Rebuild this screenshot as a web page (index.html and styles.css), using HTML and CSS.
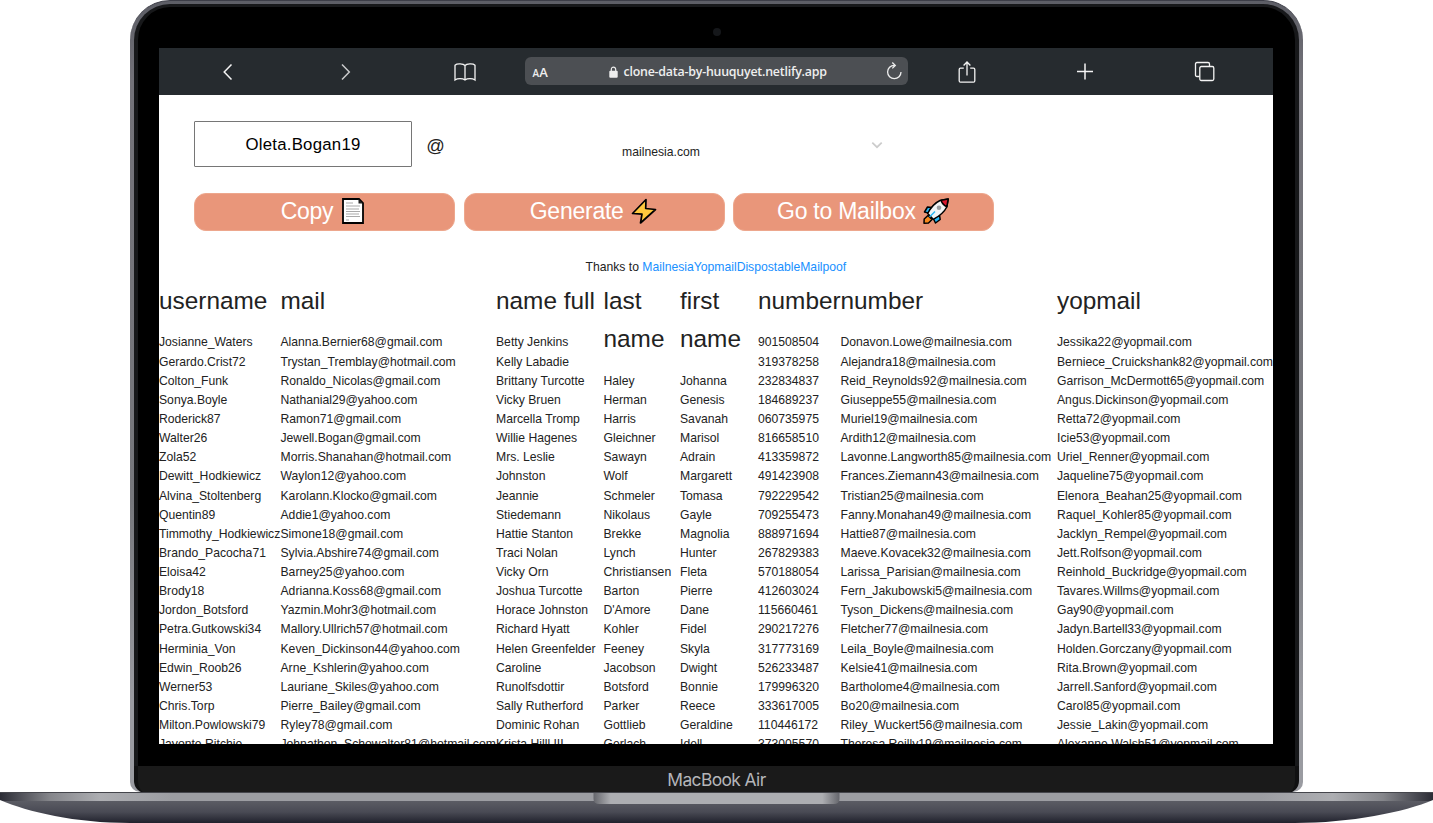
FILE: index.html
```
<!DOCTYPE html>
<html lang="en">
<head>
<meta charset="utf-8">
<title>Mail generator</title>
<link rel="stylesheet" href="styles.css">
</head>
<body>
<div class="device">
  <div class="lid">
    <div class="bezel">
      <div class="camera-row"><span class="camera"></span></div>
      <div class="screen">
        <div class="toolbar">
          <svg class="ic" viewBox="0 0 24 24"><path d="M15.500 4.500 8.200 12l7.300 7.500" stroke-width="1.500"/></svg>
          <svg class="ic dim" viewBox="0 0 24 24"><path d="m8 4.500 7.300 7.500L8 19.500" stroke-width="1.500"/></svg>
          <svg class="ic" viewBox="0 0 24 24"><path d="M12 5.300v14.200M12 5.500C10.500 3.700 4 3.300 2 5.200V20c2.600-1.800 7.500-1.800 10 0 2.500-1.800 7.400-1.800 10 0V5.200C20 3.300 13.500 3.700 12 5.500" stroke-width="1.300"/></svg>
          <div class="address">
            <span class="aa"><small>A</small>A</span>
            <span class="url"><svg class="lock" viewBox="0 0 9 12"><path d="M2.300 5V3.400C2.300.3 6.700.3 6.700 3.400V5" fill="none" stroke="#eee" stroke-width="1.200"/><rect x=".3" y="4.800" width="8.400" height="6.900" rx="1" fill="#eee"/></svg><span class="host">clone-data-by-huuquyet.netlify.app</span></span>
            <svg class="reload" viewBox="0 0 18 20"><path d="M9.300 3.300A6.700 6.700 0 1 0 16 10M7.300.500l3 3-3 2.900"/></svg>
          </div>
          <svg class="ic" viewBox="0 0 24 24"><path d="M8.800 8.200H5.500q-1.300 0-1.300 1.300v11.200q0 1.500 1.300 1.500h13q1.300 0 1.300-1.500V9.500q0-1.300-1.300-1.300h-3.300M12 15.500V2.200M8.600 5.500 12 2l3.400 3.500" stroke-width="1.300"/></svg>
          <svg class="ic" viewBox="0 0 24 24"><path d="M12 3.500v16M4 11.500h16" stroke-width="1.500"/></svg>
          <svg class="ic" viewBox="0 0 24 24"><path d="M6.500 16.500H4Q2.500 16.500 2.500 15V4Q2.500 2.500 4 2.500h11q1.500 0 1.500 1.500v2.500" stroke-width="1.300"/><rect x="6.800" y="6.500" width="14" height="14" rx="1.500" stroke-width="1.300"/></svg>
        </div>
        <div class="page">
          <div class="picker">
            <div class="name-box">Oleta.Bogan19</div>
            <span class="at">@</span>
            <div class="select"><span class="domain">mailnesia.com</span><svg class="chev" viewBox="0 0 12 8"><path d="m1.300 1.600 4.700 4.600 4.700-4.600" fill="none" stroke="#ccc" stroke-width="1.700"/></svg></div>
          </div>
          <div class="buttons">
            <div class="btn"><span>Copy</span>
              <svg class="em doc" viewBox="0 0 22 26"><path d="M1 1h16l4 4v20H1z" fill="#fff" stroke="#000" stroke-width="1.800"/><path d="M16.500 1v4.500H21z" fill="#222"/><path d="M4 5h7M4 8h14M4 11h13M4 13.500h14M4 16h13M4 18.500h14M4 22h3" stroke="#aaa" stroke-width="1.100"/></svg>
            </div>
            <div class="btn"><span>Generate</span>
              <svg class="em" viewBox="0 0 26 26"><path d="M15 1.500 1.500 15.500l9.500.7L9.500 25 24.500 11.500l-9.800-1z" fill="#ffc83d" stroke="#000" stroke-width="1.700" stroke-linejoin="round"/></svg>
            </div>
            <div class="btn"><span>Go to Mailbox</span>
              <svg class="em" viewBox="0 0 26 26"><g stroke="#000" stroke-width="1.500" stroke-linejoin="round"><path d="M9 9.500 4.500 9 1.500 14l4 1zM16.500 17l.7 4.500-4.700 3.500-2-4z" fill="#29b6f2"/><path d="M5 17.500 1.200 21 1 25.200 5.500 25l3.500-3.500z" fill="#f7891e"/><path d="M25.200 1 17 2.500Q9.500 6 4.700 15.500l5.500 5.800Q20 16.500 23.800 9z" fill="#f2f4f5"/><path d="M25.200 1 18 2.300q1.500 4.500 5.800 6.500z" fill="#d9182f"/></g><circle cx="16" cy="9.800" r="2.300" fill="#9b9ea1"/><path d="m6.500 19 5.500-5.500" stroke="#29b6f2" stroke-width="1.500"/></svg>
            </div>
          </div>
          <p class="thanks">Thanks to <a>Mailnesia</a><a>Yopmail</a><a>Dispostable</a><a>Mailpoof</a></p>
          <div class="table">
            <section><h2>username</h2><div class="rows">Josianne_Waters
Gerardo.Crist72
Colton_Funk
Sonya.Boyle
Roderick87
Walter26
Zola52
Dewitt_Hodkiewicz
Alvina_Stoltenberg
Quentin89
Timmothy_Hodkiewicz
Brando_Pacocha71
Eloisa42
Brody18
Jordon_Botsford
Petra.Gutkowski34
Herminia_Von
Edwin_Roob26
Werner53
Chris.Torp
Milton.Powlowski79
Jayonte.Ritchie</div></section>
            <section><h2>mail</h2><div class="rows">Alanna.Bernier68@gmail.com
Trystan_Tremblay@hotmail.com
Ronaldo_Nicolas@gmail.com
Nathanial29@yahoo.com
Ramon71@gmail.com
Jewell.Bogan@gmail.com
Morris.Shanahan@hotmail.com
Waylon12@yahoo.com
Karolann.Klocko@gmail.com
Addie1@yahoo.com
Simone18@gmail.com
Sylvia.Abshire74@gmail.com
Barney25@yahoo.com
Adrianna.Koss68@gmail.com
Yazmin.Mohr3@hotmail.com
Mallory.Ullrich57@hotmail.com
Keven_Dickinson44@yahoo.com
Arne_Kshlerin@yahoo.com
Lauriane_Skiles@yahoo.com
Pierre_Bailey@gmail.com
Ryley78@gmail.com
Johnathon_Schowalter81@hotmail.com</div></section>
            <section><h2>name full</h2><div class="rows">Betty Jenkins
Kelly Labadie
Brittany Turcotte
Vicky Bruen
Marcella Tromp
Willie Hagenes
Mrs. Leslie
Johnston
Jeannie
Stiedemann
Hattie Stanton
Traci Nolan
Vicky Orn
Joshua Turcotte
Horace Johnston
Richard Hyatt
Helen Greenfelder
Caroline
Runolfsdottir
Sally Rutherford
Dominic Rohan
Krista Hilll III</div></section>
            <section><h2>last<br>name</h2><div class="rows">Haley
Herman
Harris
Gleichner
Sawayn
Wolf
Schmeler
Nikolaus
Brekke
Lynch
Christiansen
Barton
D'Amore
Kohler
Feeney
Jacobson
Botsford
Parker
Gottlieb
Gerlach</div></section>
            <section><h2>first<br>name</h2><div class="rows">Johanna
Genesis
Savanah
Marisol
Adrain
Margarett
Tomasa
Gayle
Magnolia
Hunter
Fleta
Pierre
Dane
Fidel
Skyla
Dwight
Bonnie
Reece
Geraldine
Idell</div></section>
            <section><h2>number</h2><div class="rows">901508504
319378258
232834837
184689237
060735975
816658510
413359872
491423908
792229542
709255473
888971694
267829383
570188054
412603024
115660461
290217276
317773169
526233487
179996320
333617005
110446172
373005570</div></section>
            <section><h2>number</h2><div class="rows">Donavon.Lowe@mailnesia.com
Alejandra18@mailnesia.com
Reid_Reynolds92@mailnesia.com
Giuseppe55@mailnesia.com
Muriel19@mailnesia.com
Ardith12@mailnesia.com
Lavonne.Langworth85@mailnesia.com
Frances.Ziemann43@mailnesia.com
Tristian25@mailnesia.com
Fanny.Monahan49@mailnesia.com
Hattie87@mailnesia.com
Maeve.Kovacek32@mailnesia.com
Larissa_Parisian@mailnesia.com
Fern_Jakubowski5@mailnesia.com
Tyson_Dickens@mailnesia.com
Fletcher77@mailnesia.com
Leila_Boyle@mailnesia.com
Kelsie41@mailnesia.com
Bartholome4@mailnesia.com
Bo20@mailnesia.com
Riley_Wuckert56@mailnesia.com
Theresa.Reilly19@mailnesia.com</div></section>
            <section><h2>yopmail</h2><div class="rows">Jessika22@yopmail.com
Berniece_Cruickshank82@yopmail.com
Garrison_McDermott65@yopmail.com
Angus.Dickinson@yopmail.com
Retta72@yopmail.com
Icie53@yopmail.com
Uriel_Renner@yopmail.com
Jaqueline75@yopmail.com
Elenora_Beahan25@yopmail.com
Raquel_Kohler85@yopmail.com
Jacklyn_Rempel@yopmail.com
Jett.Rolfson@yopmail.com
Reinhold_Buckridge@yopmail.com
Tavares.Willms@yopmail.com
Gay90@yopmail.com
Jadyn.Bartell33@yopmail.com
Holden.Gorczany@yopmail.com
Rita.Brown@yopmail.com
Jarrell.Sanford@yopmail.com
Carol85@yopmail.com
Jessie_Lakin@yopmail.com
Alexanne.Walsh51@yopmail.com</div></section>
          </div>
        </div>
      </div>
    </div>
    <div class="chin">MacBook Air</div>
  </div>
  <svg class="base" viewBox="0 0 1433 31">
    <defs>
      <linearGradient id="top"><stop offset="0" stop-color="#2b2c35"/><stop offset=".012" stop-color="#4a4b53"/><stop offset=".035" stop-color="#85868b"/><stop offset=".07" stop-color="#adaeb2"/><stop offset=".12" stop-color="#9c9da2"/><stop offset=".88" stop-color="#9c9da2"/><stop offset=".93" stop-color="#adaeb2"/><stop offset=".965" stop-color="#85868b"/><stop offset=".988" stop-color="#4a4b53"/><stop offset="1" stop-color="#2b2c35"/></linearGradient>
      <linearGradient id="under" x2="0" y2="1"><stop offset="0" stop-color="#5b5c64"/><stop offset=".5" stop-color="#494a54"/><stop offset="1" stop-color="#20212c"/></linearGradient>
      <linearGradient id="notch"><stop offset="0" stop-color="#65666c"/><stop offset=".07" stop-color="#adaeb2"/><stop offset=".93" stop-color="#adaeb2"/><stop offset="1" stop-color="#65666c"/></linearGradient>
      <clipPath id="hull"><path d="M0 0h1433v8C1405 20 1350 31 1295 31H130C75 31 28 20 0 8z"/></clipPath>
    </defs>
    <g clip-path="url(#hull)">
      <path d="M0 9h1433v22H0z" fill="url(#under)"/>
      <path d="M0 0h1433v9H0z" fill="url(#top)"/>
      <path d="M0 0h1433v1H0z" fill="#45464c"/>
    </g>
    <path d="M593.500 1h246v6q0 5-6 5h-234q-6 0-6-5z" fill="url(#notch)"/>
  </svg>
</div>
</body>
</html>
```
FILE: styles.css
```
body { margin: 0; background: #fff; font-family: "Liberation Sans", Arial, sans-serif; color: #222; overflow: hidden; }
.device { width: 1433px; height: 823px; display: flex; flex-direction: column; align-items: center; overflow: hidden; }
.lid { box-sizing: border-box; width: 1173px; height: 792px; background: linear-gradient(#5d5e66, #737279 80px, #77787d 500px, #9a9ba1 700px); border-radius: 40px 40px 10px 10px; padding: 1px 4px 0; border-top: 1px solid #3c3d47; }
.bezel { box-sizing: border-box; height: 763px; background: #000; border: solid #17181a; border-width: 3px 4px 0; border-radius: 36px 36px 0 0; padding: 0 21px; margin-top: 2px; }
.camera-row { height: 41px; display: flex; justify-content: center; align-items: center; }
.camera { width: 8px; height: 8px; border-radius: 50%; background: #15171a; margin-top: 8px; }
.screen { width: 1114px; height: 696px; background: #fff; overflow: hidden; }
.chin { box-sizing: border-box; height: 27px; margin-top: -1px; background: #1a1a1a; border: solid #101011; border-width: 0 4px; border-radius: 0 0 12px 12px; text-align: center; font: 17.400px/28px Inter, sans-serif; letter-spacing: -.600px; color: #b4b5b9; }
.base { width: 1433px; height: 31px; flex: none; display: block; }

.toolbar { height: 47px; background: #262b2f; display: grid; grid-template-columns: 137px 100px 137px 366px 135px 102px 1fr; align-items: center; }
.ic { width: 24px; height: 24px; fill: none; stroke: #f4f4f4; justify-self: center; }
.dim { stroke: #c9cacb; }
.address { height: 28px; width: 383px; margin: 0 -9px 1px; box-sizing: border-box; border-radius: 6px; background: #4c4f53; display: grid; grid-template-columns: 60px 1fr 50px; align-items: center; justify-self: center; padding: 0 5px 0 8px; color: #eee; font: 600 12.400px/28px "Open Sans", sans-serif; }
.aa { font-size: 13px; padding-top: 1px; }
.aa small { font-size: 10px; }
.url { display: flex; align-items: center; gap: 6px; padding-left: 16px; white-space: nowrap; }
.host { letter-spacing: -.220px; }
.lock { width: 9px; height: 12px; }
.reload { width: 18px; height: 20px; fill: none; stroke: #eee; stroke-width: 1.300; justify-self: end; }

.page { height: 649px; font-size: 12.180px; }
.picker { display: flex; padding: 26px 0 0 35px; height: 46px; }
.name-box { box-sizing: border-box; width: 218px; height: 46px; border: 1px solid #767676; border-radius: 1px; font-size: 16.800px; line-height: 45px; text-align: center; color: #000; letter-spacing: .250px; }
.at { width: 47px; text-align: center; font-size: 18.300px; line-height: 49px; }
.select { display: flex; width: 440px; }
.domain { width: 404px; text-align: center; line-height: 62px; }
.chev { width: 12px; height: 8px; margin: 20px 0 0 8px; }
.buttons { display: flex; gap: 8.700px; padding: 26px 0 0 35px; }
.btn { box-sizing: border-box; width: 261px; height: 38px; border: 1px solid #eda78d; border-radius: 12px; background: #e9967a; color: #fff; font-size: 23px; letter-spacing: -.250px; display: flex; justify-content: center; align-items: center; gap: 7px; padding: 0 2px 2px 0; }
.em { width: 26px; height: 26px; }
.doc { width: 22px; margin: 0 2px; }
.thanks { margin: 27px 0 0 426.500px; line-height: 19px; }
.thanks a { color: #1890ff; }
.table { display: grid; grid-template-columns: 121.500px 215.500px 107.500px 76.500px 78px 82.500px 216.500px 216px; margin: 5px 0 0; }
h2 { margin: 0 0 13.100px; font-size: 24.360px; font-weight: 400; line-height: 38.280px; white-space: nowrap; }
.rows { white-space: pre; line-height: 19.140px; }
```
